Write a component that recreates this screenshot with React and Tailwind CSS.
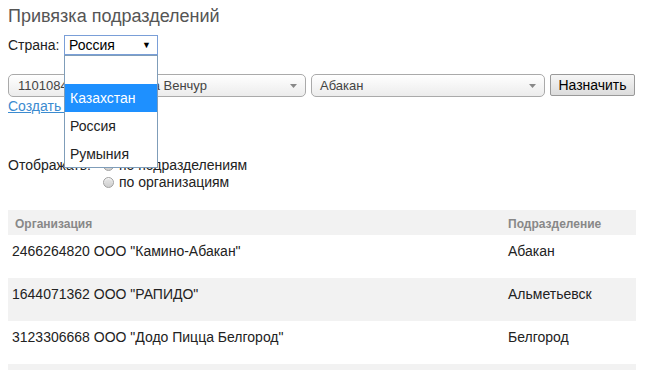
import React from "react";

const rows = [
  { org: '2466264820 ООО "Камино-Абакан"', sub: "Абакан" },
  { org: '1644071362 ООО "РАПИДО"', sub: "Альметьевск" },
  { org: '3123306668 ООО "Додо Пицца Белгород"', sub: "Белгород" },
];

const countries = ["", "Казахстан", "Россия", "Румыния"];

function Arrow() {
  return (
    <svg width="7" height="4" viewBox="0 0 7 4" className="shrink-0">
      <path d="M0 0h7L3.5 4z" fill="#888" />
    </svg>
  );
}

function Radio() {
  return (
    <span className="inline-block w-[11px] h-[11px] rounded-full border border-[#a0a0a0] bg-gradient-to-b from-[#e8e8e8] to-[#cfcfcf] shadow-[inset_0_1px_1px_rgba(255,255,255,0.8)]" />
  );
}

export default function App() {
  return (
    <div className="w-[650px] h-[370px] overflow-hidden bg-white px-2 font-['Liberation_Sans',Arial,sans-serif] text-[#333]">
      <h1 className="mt-[6px] text-[18px] leading-[20px] font-normal text-[#555]">
        Привязка подразделений
      </h1>

      <div className="mt-[9px] flex items-center h-[20px] text-[14px] leading-[20px] text-[#222]">
        <span className="w-[56px]">Страна:</span>
        <div className="relative">
          <div className="w-[94px] h-[20px] border border-[#7a9fd8] flex items-center justify-between pl-[4px] pr-[6px] bg-white">
            <span className="text-[14px] text-black">Россия</span>
            <span className="text-[9px] text-black leading-none">▼</span>
          </div>
          <div className="absolute left-0 top-[20px] z-10 w-[94px] border border-[#7f9db9] bg-white">
            {countries.map((c, i) => (
              <div
                key={i}
                className={`${i === 1 ? "bg-[#1e90ff] text-white" : "text-[#222]"} ${
                  i === 3 ? "h-[27px]" : "h-[28px]"
                } flex items-center pl-[5px] text-[14px]`}
              >
                {c}
              </div>
            ))}
          </div>
        </div>
      </div>

      <div className="mt-[19px] flex items-start gap-[5px] text-[13px]">
        <div className="w-[298px] h-[23px] rounded-[5px] border border-[#aaa] bg-gradient-to-b from-white to-[#ececec] flex items-center justify-between pl-[9px] pr-[8px] text-[#444]">
          <span>1101084593 ООО "Гала Венчур</span>
          <Arrow />
        </div>
        <div className="w-[234px] h-[23px] rounded-[5px] border border-[#aaa] bg-gradient-to-b from-white to-[#ececec] flex items-center justify-between pl-[8px] pr-[8px] text-[#444]">
          <span>Абакан</span>
          <Arrow />
        </div>
        <button className="w-[85px] h-[22px] rounded-[2px] border border-[#999] bg-gradient-to-b from-[#f6f6f6] to-[#dcdcdc] text-[14px] text-black leading-none">
          Назначить
        </button>
      </div>

      <div className="mt-[1px] text-[14px] leading-[16px]">
        <a className="text-[#3b8bd0] underline">Создать организацию</a>
      </div>

      <div className="mt-[43px] flex items-start text-[14px] leading-[17px] text-[#222]">
        <span className="w-[95px]">Отображать:</span>
        <div className="flex flex-col">
          <label className="flex items-center gap-[5px] h-[17px]">
            <Radio />
            <span>по подразделениям</span>
          </label>
          <label className="flex items-center gap-[5px] h-[17px]">
            <Radio />
            <span>по организациям</span>
          </label>
        </div>
      </div>

      <div className="mt-[19px] w-[628px]">
        <div className="flex h-[25px] bg-[#f2f2f2] text-[12px] font-bold text-[#888] pt-[7px] leading-[14px]">
          <div className="w-[500px] pl-[7px]">Организация</div>
          <div className="flex-1">Подразделение</div>
        </div>
        {rows.map((r, i) => (
          <div
            key={i}
            className={`${i % 2 === 1 ? "bg-[#f2f2f2]" : "bg-white"} flex h-[43px] pt-[6px] text-[14px] leading-[20px] text-[#222]`}
          >
            <div className="w-[500px] pl-[4px]">{r.org}</div>
            <div className="flex-1">{r.sub}</div>
          </div>
        ))}
        <div className="h-[43px] bg-[#f2f2f2]" />
      </div>
    </div>
  );
}
